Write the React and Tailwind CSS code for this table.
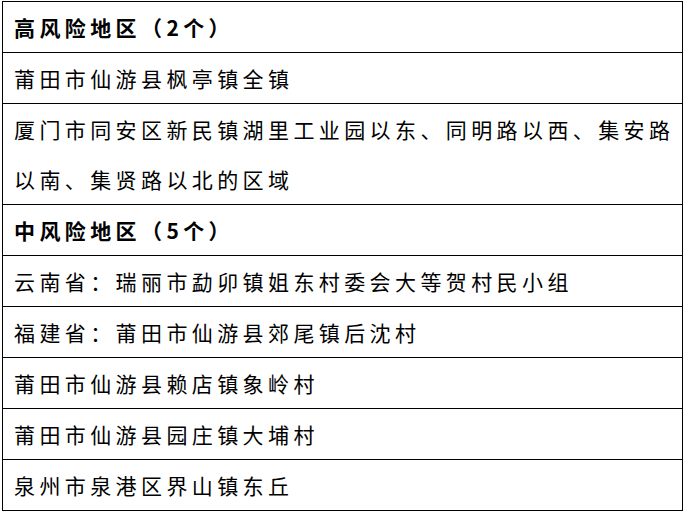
const ROWS = [
  { text: '高风险地区（2个）', head: true },
  { text: '莆田市仙游县枫亭镇全镇' },
  { text: '厦门市同安区新民镇湖里工业园以东、同明路以西、集安路以南、集贤路以北的区域' },
  { text: '中风险地区（5个）', head: true },
  { text: '云南省：瑞丽市勐卯镇姐东村委会大等贺村民小组' },
  { text: '福建省：莆田市仙游县郊尾镇后沈村' },
  { text: '莆田市仙游县赖店镇象岭村' },
  { text: '莆田市仙游县园庄镇大埔村' },
  { text: '泉州市泉港区界山镇东丘' },
];

export default function App() {
  return (
    <div className="w-[687px] h-[511px] bg-white pt-[1px] pl-[2px]">
      <div
        className="w-[681px] border border-black text-black"
        style={{ fontFamily: '"Noto Sans CJK SC", "Noto Sans", sans-serif' }}
      >
        {ROWS.map((r, i) => (
          <div
            key={i}
            className={`pl-[11px] pr-[1px] text-[21px] leading-[50px] tracking-[4.4px] ${
              i > 0 ? 'border-t border-black' : ''
            } ${r.head ? 'font-bold' : 'font-normal'}`}
          >
            {r.text}
          </div>
        ))}
      </div>
    </div>
  );
}
